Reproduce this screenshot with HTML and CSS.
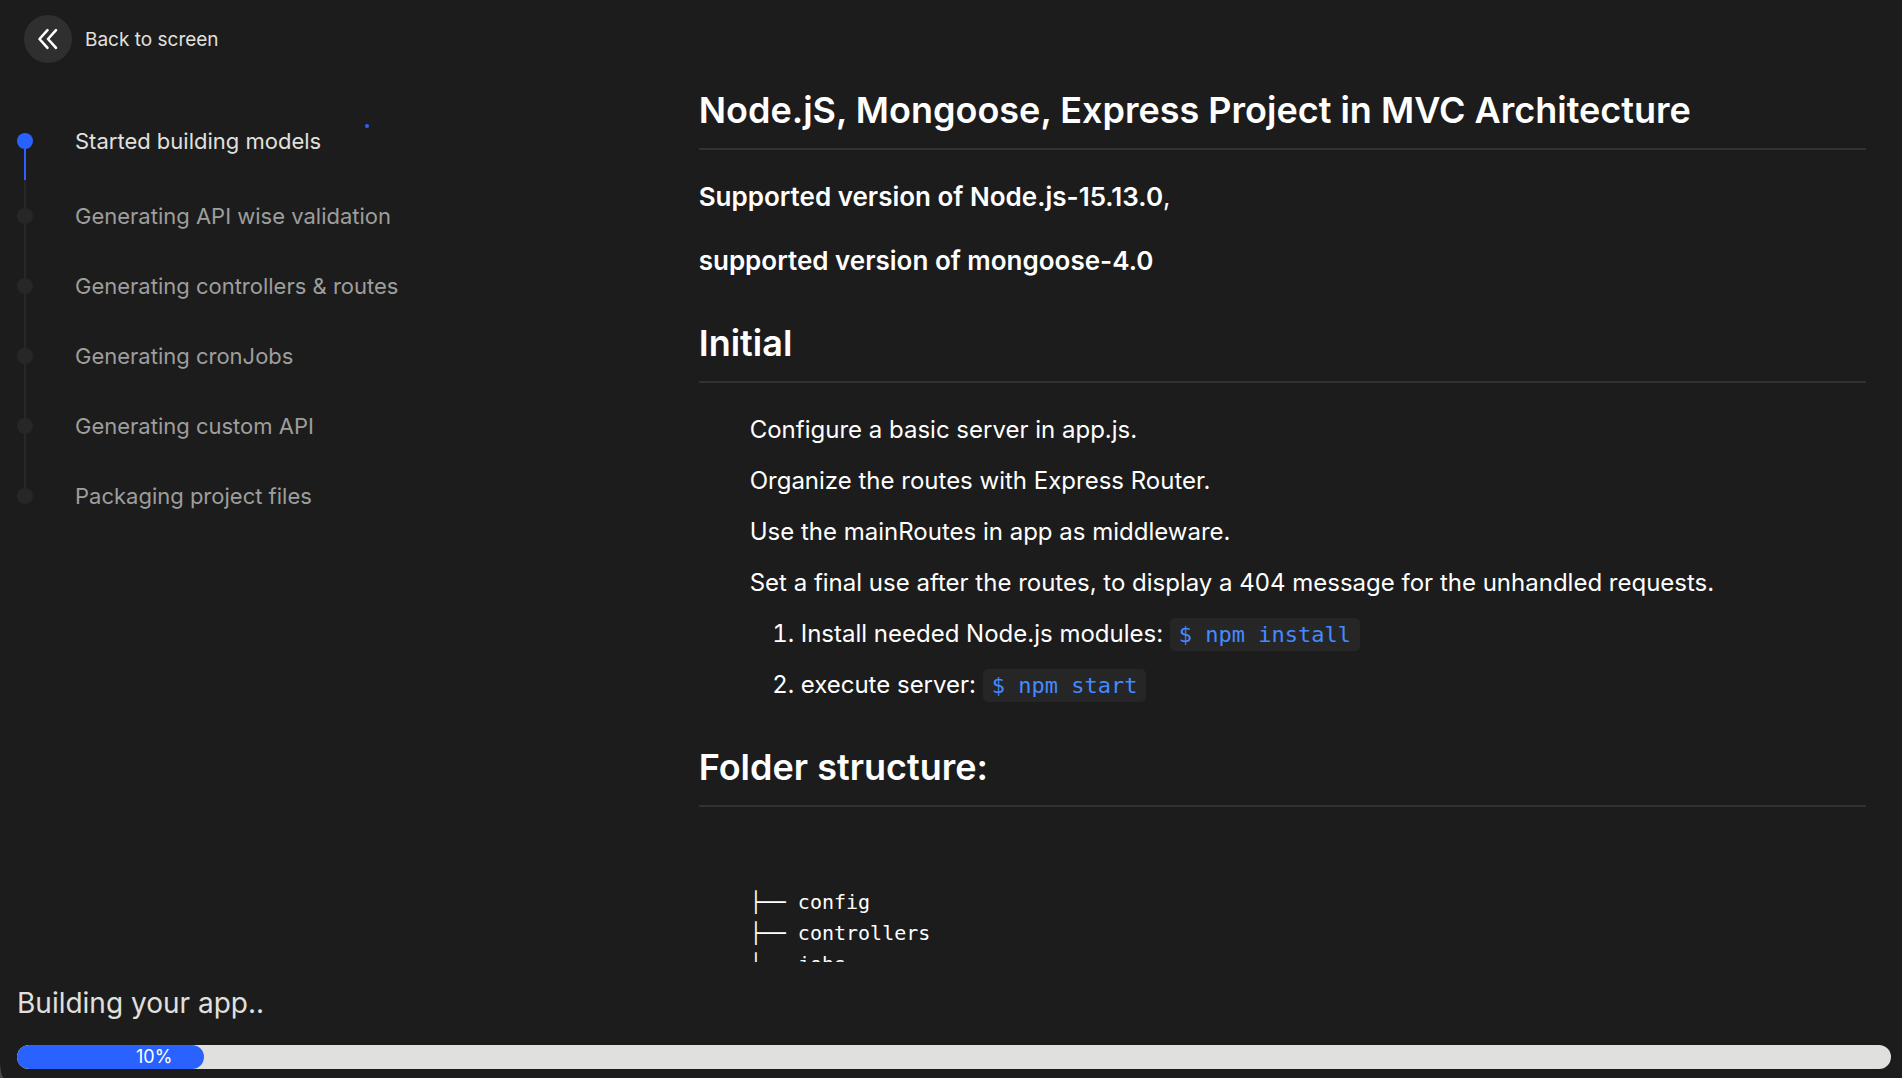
FILE: index.html
```html
<!DOCTYPE html>
<html lang="en">
<head>
<meta charset="utf-8">
<meta name="viewport" content="width=device-width, initial-scale=1">
<title>Building your app</title>
<link rel="stylesheet" href="styles.css">
</head>
<body>
<div class="app">
  <div class="workspace">
    <aside class="sidebar">
      <button class="back" type="button">
        <span class="back-icon">
          <svg width="24" height="24" viewBox="0 0 24 24" fill="none" stroke="currentColor" stroke-width="2.6" stroke-linecap="round" stroke-linejoin="round" aria-hidden="true">
            <path d="M11.5 3.2 3.5 12l8 8.800"/>
            <path d="M20 3.2 12 12l8 8.800"/>
          </svg>
        </span>
        Back to screen
      </button>
      <ol class="steps">
        <li class="step step-active"><span class="marker"></span><span class="label">Started building models</span><span class="spinner"></span></li>
        <li class="step"><span class="marker"></span><span class="label">Generating API wise validation</span></li>
        <li class="step"><span class="marker"></span><span class="label">Generating controllers &amp; routes</span></li>
        <li class="step"><span class="marker"></span><span class="label">Generating cronJobs</span></li>
        <li class="step"><span class="marker"></span><span class="label">Generating custom API</span></li>
        <li class="step"><span class="marker"></span><span class="label">Packaging project files</span></li>
      </ol>
    </aside>
    <main class="readme">
      <h2>Node.jS, Mongoose, Express Project in MVC Architecture</h2>
      <p><strong>Supported version of Node.js-15.13.0</strong>,</p>
      <p><strong>supported version of mongoose-4.0</strong></p>
      <h2>Initial</h2>
      <ul>
        <li>Configure a basic server in app.js.</li>
        <li>Organize the routes with Express Router.</li>
        <li>Use the mainRoutes in app as middleware.</li>
        <li>Set a final use after the routes, to display a 404 message for the unhandled requests.
          <ol>
            <li>Install needed Node.js modules: <code>$ npm install</code></li>
            <li>execute server: <code>$ npm start</code></li>
          </ol>
        </li>
      </ul>
      <h2>Folder structure:</h2>
      <pre>├── config
├── controllers
├── jobs</pre>
    </main>
  </div>
  <footer class="status">
    <p class="status-text" id="status">Building your app..</p>
    <div class="progress" role="progressbar" aria-labelledby="status" aria-valuenow="10" aria-valuemin="0" aria-valuemax="100">
      <div class="progress-fill" style="width: 10%">10%</div>
    </div>
  </footer>
</div>
</body>
</html>
```
FILE: styles.css
```css
* {
  box-sizing: border-box;
}

html {
  background: #4a4a4a;
}

body {
  margin: 0;
  font-family: Inter, "Liberation Sans", sans-serif;
  color: #e0e0de;
}

.app {
  display: flex;
  flex-direction: column;
  height: 100vh;
  background: #1c1c1c;
  border-bottom-left-radius: 4px 18px;
}

.workspace {
  display: flex;
  flex: 1;
  min-height: 0;
}

.sidebar {
  width: 35%;
  flex: none;
  padding: 15px 16px 0;
}

.back {
  display: flex;
  align-items: center;
  gap: 13px;
  padding: 0 8px;
  border: 0;
  background: none;
  color: inherit;
  font: inherit;
  font-size: 19px;
  cursor: pointer;
}

.back-icon {
  display: grid;
  place-items: center;
  width: 48px;
  height: 48px;
  border-radius: 50%;
  background: #2f2f2f;
  color: #fff;
}

.steps {
  margin: 61px 0 0;
  padding: 0;
  list-style: none;
}

.step {
  display: flex;
  gap: 41px;
  min-height: 70px;
  color: #9e9e9c;
  font-size: 22px;
  line-height: 34px;
}

.step-active {
  min-height: 75px;
  color: #e0e0de;
}

.marker {
  display: flex;
  flex-direction: column;
  align-items: center;
  width: 18px;
  padding-top: 9px;
  margin-bottom: -9px;
}

.marker::before {
  content: "";
  width: 16px;
  height: 16px;
  border-radius: 50%;
  background: #272727;
}

.marker::after {
  content: "";
  flex: 1;
  width: 2px;
  background: #272727;
}

.step-active .marker::before {
  background: #2962ff;
}

.step-active .marker::after {
  background: linear-gradient(#2962ff 31px, #272727 31px);
}

.step:last-child .marker::after {
  display: none;
}

.spinner {
  width: 4px;
  height: 4px;
  margin-left: 3px;
  border-radius: 50%;
  background: #2962ff;
}

.readme {
  flex: 1;
  min-width: 0;
  margin: 86px 36px 0 33px;
  overflow: hidden;
  color: #fff;
  font-size: 24px;
  line-height: 38px;
}

.readme h2 {
  margin: 39px 0 28px;
  padding-bottom: 14px;
  border-bottom: 2px solid #323232;
  font-size: 36px;
  font-weight: 600;
  line-height: 48px;
}

.readme h2:first-child {
  margin-top: 0;
}

.readme p {
  margin: 0 0 26px;
  font-size: 26px;
}

.readme strong {
  font-weight: 600;
}

.readme ul,
.readme ol {
  margin: 0;
  padding-left: 51px;
}

.readme ul {
  list-style: none;
}

.readme li + li,
.readme li > ol {
  margin-top: 13px;
}

.readme code {
  padding: 4px 9px;
  border-radius: 5px;
  background: #262626;
  color: #448aff;
  font: 22px "DejaVu Sans Mono", monospace;
}

.readme pre {
  margin: 0;
  padding: 52px 51px 0;
  font: 20px/31px "DejaVu Sans Mono", monospace;
}

.status {
  padding: 24px 11px 9px 17px;
}

.status-text {
  margin: 0 0 25px;
  font-size: 28px;
  line-height: 34px;
}

.progress {
  height: 24px;
  border-radius: 12px;
  background: #e0e0de;
  overflow: hidden;
}

.progress-fill {
  height: 100%;
  padding-right: 32px;
  border-radius: 12px;
  background: #2962ff;
  color: #fff;
  font-size: 18px;
  line-height: 24px;
  text-align: right;
}
```
